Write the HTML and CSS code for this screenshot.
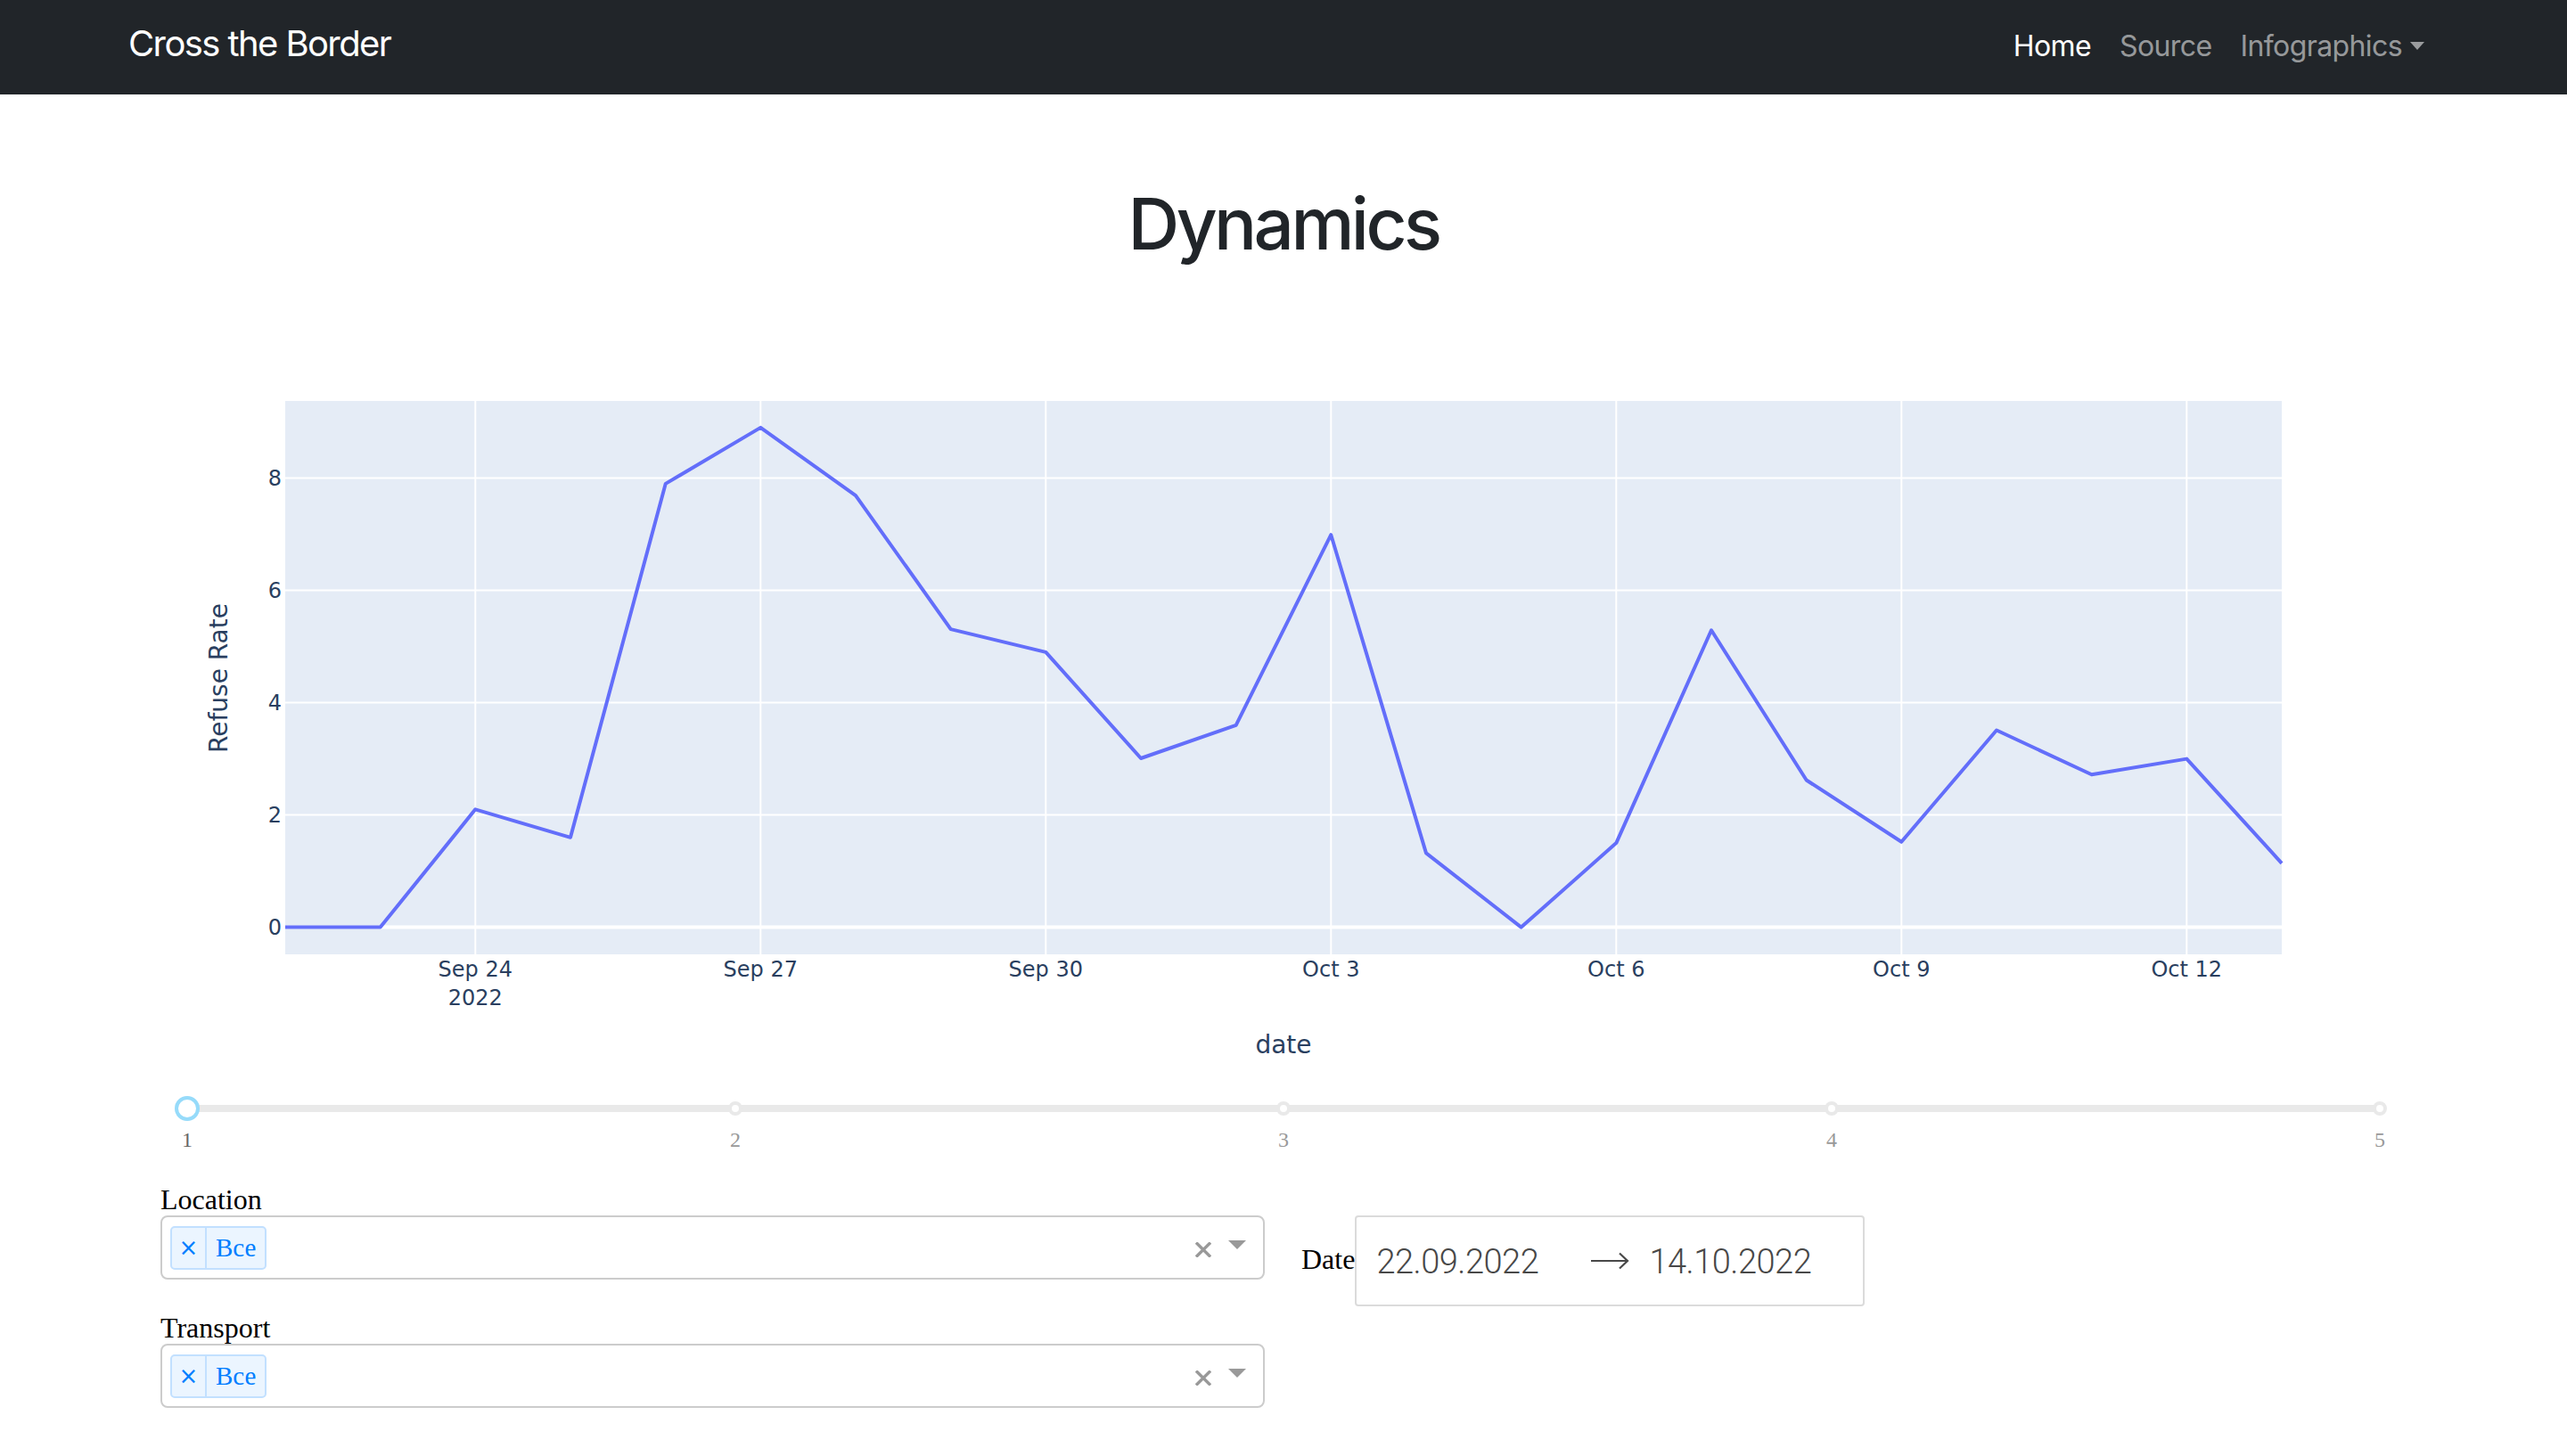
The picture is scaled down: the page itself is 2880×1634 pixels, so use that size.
FILE: index.html
```html
<!DOCTYPE html>
<html lang="en">
<head>
<meta charset="utf-8">
<title>Cross the Border</title>
<link rel="stylesheet" href="styles.css">
</head>
<body>
<nav class="navbar">
  <a class="brand" href="#">Cross the Border</a>
  <ul class="nav">
    <li><a class="nav-link active" href="#">Home</a></li>
    <li><a class="nav-link" href="#">Source</a></li>
    <li><a class="nav-link dropdown" href="#">Infographics<span class="caret"></span></a></li>
  </ul>
</nav>

<h1 class="title">Dynamics</h1>

<div class="graph">
  <svg class="chart" width="2560" height="900" viewBox="0 0 2560 900" xmlns="http://www.w3.org/2000/svg">
    <rect x="160" y="150" width="2240" height="621" fill="#e5ecf6"/>
    <g stroke="#ffffff" stroke-width="2">
      <line x1="373.3" y1="150" x2="373.3" y2="771"/>
      <line x1="693.3" y1="150" x2="693.3" y2="771"/>
      <line x1="1013.3" y1="150" x2="1013.3" y2="771"/>
      <line x1="1333.3" y1="150" x2="1333.3" y2="771"/>
      <line x1="1653.3" y1="150" x2="1653.3" y2="771"/>
      <line x1="1973.3" y1="150" x2="1973.3" y2="771"/>
      <line x1="2293.3" y1="150" x2="2293.3" y2="771"/>
      <line x1="160" y1="614.6" x2="2400" y2="614.6"/>
      <line x1="160" y1="488.6" x2="2400" y2="488.6"/>
      <line x1="160" y1="362.6" x2="2400" y2="362.6"/>
      <line x1="160" y1="236.6" x2="2400" y2="236.6"/>
    </g>
    <line x1="160" y1="740.6" x2="2400" y2="740.6" stroke="#ffffff" stroke-width="4"/>
    <polyline fill="none" stroke="#636efa" stroke-width="4" stroke-linejoin="round"
      points="160,740.6 266.7,740.6 373.3,608.3 480,639.8 586.7,242.9 693.3,179.9 800,256.1 906.7,406.1 1013.3,431.9 1120,551 1226.7,513.8 1333.3,300.2 1440,657.4 1546.7,740.6 1653.3,646.1 1760,407.3 1866.7,575.5 1973.3,644.8 2080,519.5 2186.7,569.2 2293.3,551.6 2400,668.8"/>
    <g class="tick" text-anchor="end">
      <text x="156" y="749">0</text>
      <text x="156" y="623">2</text>
      <text x="156" y="497">4</text>
      <text x="156" y="371">6</text>
      <text x="156" y="245">8</text>
    </g>
    <g class="tick" text-anchor="middle">
      <text x="373.3" y="796">Sep 24</text>
      <text x="373.3" y="828">2022</text>
      <text x="693.3" y="796">Sep 27</text>
      <text x="1013.3" y="796">Sep 30</text>
      <text x="1333.3" y="796">Oct 3</text>
      <text x="1653.3" y="796">Oct 6</text>
      <text x="1973.3" y="796">Oct 9</text>
      <text x="2293.3" y="796">Oct 12</text>
    </g>
    <text class="axis-title" x="1280" y="882" text-anchor="middle">date</text>
    <text class="axis-title" x="95" y="461" text-anchor="middle" transform="rotate(-90 95 461)">Refuse Rate</text>
  </svg>
</div>

<div class="slider">
  <div class="rail"></div>
  <span class="dot" style="left:0%"></span>
  <span class="dot" style="left:25%"></span>
  <span class="dot" style="left:50%"></span>
  <span class="dot" style="left:75%"></span>
  <span class="dot" style="left:100%"></span>
  <span class="handle" style="left:0%"></span>
  <span class="mark active" style="left:0%">1</span>
  <span class="mark" style="left:25%">2</span>
  <span class="mark" style="left:50%">3</span>
  <span class="mark" style="left:75%">4</span>
  <span class="mark" style="left:100%">5</span>
</div>

<div class="controls">
  <div class="left-col">
    <label class="field-label">Location</label>
    <div class="select">
      <div class="chip"><span class="chip-x">×</span><span class="chip-label">Все</span></div>
      <div class="select-tools">
        <svg class="clear" width="18" height="17" viewBox="0 0 18 17"><path d="M1 0.5 L17 16.5 M17 0.5 L1 16.5" stroke="#999" stroke-width="3.4"/></svg>
        <span class="arrow"></span>
      </div>
    </div>
    <label class="field-label second">Transport</label>
    <div class="select">
      <div class="chip"><span class="chip-x">×</span><span class="chip-label">Все</span></div>
      <div class="select-tools">
        <svg class="clear" width="18" height="17" viewBox="0 0 18 17"><path d="M1 0.5 L17 16.5 M17 0.5 L1 16.5" stroke="#999" stroke-width="3.4"/></svg>
        <span class="arrow"></span>
      </div>
    </div>
  </div>
  <div class="date-col">
    <label class="date-label">Date</label>
    <div class="date-picker">
      <span class="date-value first">22.09.2022</span>
      <svg class="date-arrow" width="44" height="20" viewBox="0 0 44 20"><path d="M1 10 H42 M33 1.5 L42 10 L33 18.5" fill="none" stroke="#484848" stroke-width="2.2"/></svg>
      <span class="date-value">14.10.2022</span>
    </div>
  </div>
</div>
</body>
</html>
```

FILE: styles.css
```css
html, body {
  margin: 0;
  padding: 0;
  background: #ffffff;
}

body {
  font-family: Inter, "Liberation Sans", sans-serif;
  color: #212529;
}

.navbar {
  height: 106px;
  box-sizing: border-box;
  background: #212529;
  display: flex;
  align-items: baseline;
  justify-content: space-between;
  padding: 19px 144px 0 144px;
}

.brand {
  font-size: 40px;
  line-height: 60px;
  color: #ffffff;
  text-decoration: none;
  letter-spacing: -1.6px;
}

.nav {
  list-style: none;
  margin: 0;
  padding: 0;
  display: flex;
  align-items: baseline;
}

.nav-link {
  display: block;
  font-size: 32px;
  line-height: 48px;
  padding: 0 16px;
  color: rgba(255, 255, 255, 0.55);
  text-decoration: none;
  letter-spacing: -0.6px;
}

.nav-link.active {
  color: #ffffff;
}

.caret {
  display: inline-block;
  margin-left: 9px;
  vertical-align: 7px;
  border-top: 9px solid rgba(255, 255, 255, 0.55);
  border-left: 8px solid transparent;
  border-right: 8px solid transparent;
}

.title {
  margin: 97px 0 0 0;
  font-size: 80px;
  line-height: 96px;
  font-weight: 500;
  text-align: center;
  letter-spacing: -3.6px;
}

.graph {
  margin: 1px 160px 0 160px;
  height: 900px;
}

.chart {
  display: block;
}

.tick text {
  font-family: "DejaVu Sans", Verdana, sans-serif;
  font-size: 24px;
  fill: #2a3f5f;
}

.axis-title {
  font-family: "DejaVu Sans", Verdana, sans-serif;
  font-size: 28px;
  fill: #2a3f5f;
}

.slider {
  position: relative;
  height: 96px;
  margin: 0 210px 0 210px;
}

.rail {
  position: absolute;
  left: 0;
  right: 0;
  top: 40px;
  height: 8px;
  border-radius: 8px;
  background: #e9e9e9;
}

.dot {
  position: absolute;
  top: 36px;
  width: 16px;
  height: 16px;
  margin-left: -8px;
  box-sizing: border-box;
  border: 4px solid #e9e9e9;
  border-radius: 50%;
  background: #ffffff;
}

.handle {
  position: absolute;
  top: 30px;
  width: 28px;
  height: 28px;
  margin-left: -14px;
  box-sizing: border-box;
  border: 4px solid #96dbfa;
  border-radius: 50%;
  background: #ffffff;
}

.mark {
  position: absolute;
  top: 66px;
  transform: translateX(-50%);
  font-family: "Liberation Serif", "Times New Roman", serif;
  font-size: 24px;
  line-height: 26px;
  color: #999999;
}

.mark.active {
  color: #666666;
}

.controls {
  display: flex;
  align-items: flex-start;
  margin: 32px 0 0 180px;
}

.left-col {
  width: 1239px;
}

.field-label {
  display: block;
  font-family: "Liberation Serif", "Times New Roman", serif;
  font-size: 32px;
  line-height: 36px;
  color: #000000;
}

.field-label.second {
  margin-top: 36px;
}

.select {
  height: 72px;
  box-sizing: border-box;
  border: 2px solid #cccccc;
  border-radius: 8px;
  display: flex;
  align-items: center;
  justify-content: space-between;
  padding: 0 0 0 9px;
  background: #ffffff;
}

.chip {
  display: flex;
  height: 49px;
  box-sizing: border-box;
  border: 2px solid #c2e0ff;
  border-radius: 5px;
  background: #ebf5ff;
  color: #007eff;
  font-family: "Liberation Serif", "Times New Roman", serif;
}

.chip-x {
  width: 37px;
  border-right: 2px solid #c2e0ff;
  display: flex;
  align-items: center;
  justify-content: center;
  font-family: "DejaVu Sans", sans-serif;
  font-size: 26px;
}

.chip-label {
  display: flex;
  align-items: center;
  padding: 0 10px 0 10px;
  font-size: 29px;
}

.select-tools {
  display: flex;
  align-items: center;
  margin-right: 19px;
}

.clear {
  display: block;
  margin-right: 19px;
  margin-top: 4px;
}

.arrow {
  display: block;
  width: 0;
  height: 0;
  border-top: 10px solid #999999;
  border-left: 10px solid transparent;
  border-right: 10px solid transparent;
  margin-top: -6px;
}

.date-col {
  display: flex;
  align-items: center;
  margin: 36px 0 0 41px;
}

.date-label {
  font-family: "Liberation Serif", "Times New Roman", serif;
  font-size: 32px;
  line-height: 36px;
  color: #000000;
  margin-top: -4px;
}

.date-picker {
  width: 572px;
  height: 102px;
  box-sizing: border-box;
  border: 2px solid #dbdbdb;
  border-radius: 4px;
  display: flex;
  align-items: center;
  padding-left: 22px;
}

.date-value {
  font-family: Roboto, "Open Sans", sans-serif;
  font-weight: 300;
  font-size: 38px;
  line-height: 48px;
  color: #484848;
  letter-spacing: -0.5px;
  margin-top: 2px;
}

.date-value.first {
  width: 240px;
}

.date-arrow {
  display: block;
  margin-right: 22px;
}
```
